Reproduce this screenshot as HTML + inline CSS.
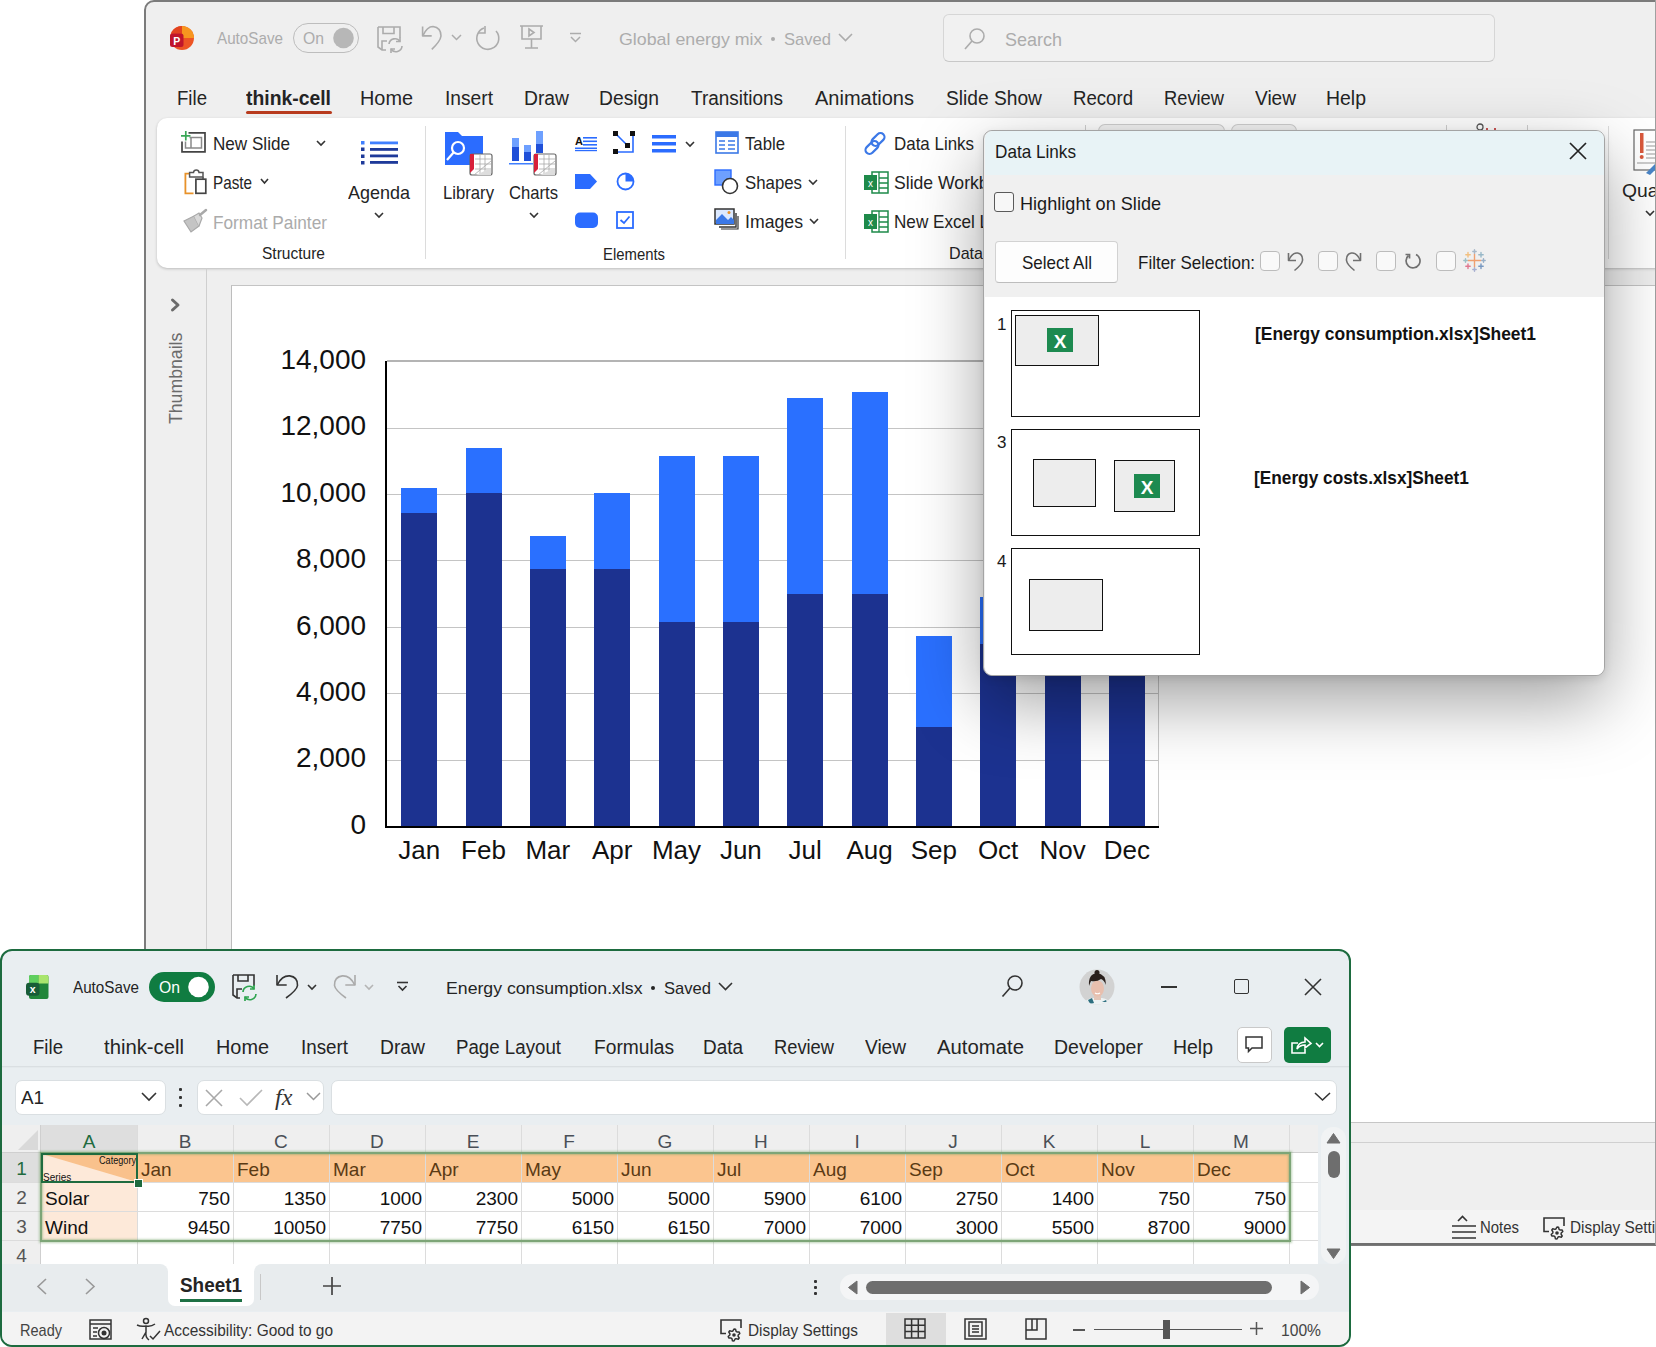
<!DOCTYPE html>
<html><head><meta charset="utf-8"><style>
html,body{margin:0;padding:0;}
body{width:1656px;height:1347px;position:relative;overflow:hidden;background:#fff;font-family:"Liberation Sans",sans-serif;}
.t{position:absolute;white-space:nowrap;line-height:1;transform-origin:0 0;}
svg{overflow:visible}
</style></head><body>
<div style="position:absolute;left:144px;top:0px;width:1540px;height:1246px;box-sizing:border-box;border:2px solid #7b7b7b;border-top-left-radius:10px;background:#efefef;"></div>
<div style="position:absolute;left:157px;top:118px;width:1520px;height:150px;background:#fff;border-radius:10px;box-shadow:0 1px 3px rgba(0,0,0,0.22);"></div>
<div style="position:absolute;left:206px;top:268px;width:1px;height:854px;background:#cfcfcf;"></div>
<div style="position:absolute;left:231px;top:285px;width:1424px;height:837px;box-sizing:border-box;border-left:1px solid #bdbdbd;border-top:1px solid #c4c4c4;background:#fff;"></div>
<div style="position:absolute;left:146px;top:1122px;width:1509px;height:1px;background:#c6c6c6;"></div>
<div style="position:absolute;left:146px;top:1142px;width:1509px;height:1px;background:#d0d0d0;"></div>
<div style="position:absolute;left:146px;top:1210px;width:1509px;height:33px;background:#f4f4f4;"></div>
<div style="position:absolute;left:144px;top:1243px;width:1512px;height:2px;background:#6f6f6f;"></div>
<svg style="position:absolute;left:170px;top:26px;" width="24" height="24" viewBox="0 0 24 24"><circle cx="12" cy="12" r="12" fill="#ed5424"/><path d="M12 0 A12 12 0 0 1 24 12 L12 12 Z" fill="#f7961f"/><path d="M12 0 A12 12 0 0 0 1 7.5 L12 7.5 Z" fill="#e2431f"/><rect x="0" y="7.5" width="13.5" height="13.5" rx="2.5" fill="#c0152b"/><text x="6.8" y="18.5" font-family="Liberation Sans" font-weight="700" font-size="10.5" fill="#fff" text-anchor="middle">P</text></svg>
<div class="t" style="left:217.0px;top:29.7px;font-size:17px;color:#acacac;font-weight:400;transform:scaleX(0.895);">AutoSave</div>
<div style="position:absolute;left:293px;top:23px;width:66px;height:30px;box-sizing:border-box;border:1px solid #bdbdbd;border-radius:15px;"></div>
<div class="t" style="left:303.0px;top:29.7px;font-size:17px;color:#acacac;font-weight:400;transform:scaleX(0.926);">On</div>
<svg style="position:absolute;left:333px;top:28px;" width="22" height="22" viewBox="0 0 22 22"><circle cx="10.5" cy="10" r="10.3" fill="#b7b7b7"/></svg>
<svg style="position:absolute;left:377px;top:26px;" width="27" height="27" viewBox="0 0 27 27"><g fill="none" stroke="#acacac" stroke-width="1.6"><path d="M1 1 H23 V12 M1 1 V21 L5 24 H9"/><path d="M6 1 V7.5 H17 V1"/><path d="M5 24 V15 H10"/></g><g fill="none" stroke="#acacac" stroke-width="1.6"><path d="M12 18 A6 6 0 0 1 23 15.5 M25 20 A6 6 0 0 1 14 23"/><path d="M23 11.5 V15.5 H19 M14 27 V23 H18"/></g></svg>
<svg style="position:absolute;left:421px;top:25px;" width="26" height="28" viewBox="0 0 26 28"><g fill="none" stroke="#acacac" stroke-width="1.6" stroke-linejoin="round"><path d="M1.6 1.6 V10.9 H10.7"/><path d="M1.9 10.7 Q6 1.5 12 1.5 Q20 2.5 20 11 Q19.5 16 10.8 24.4"/></g></svg>
<svg style="position:absolute;left:451px;top:34px;" width="12" height="8" viewBox="0 0 12 8"><path d="M1 1 L5.5 5.5 L10 1" fill="none" stroke="#acacac" stroke-width="1.5"/></svg>
<svg style="position:absolute;left:476px;top:25px;" width="28" height="28" viewBox="0 0 28 28"><g fill="none" stroke="#acacac" stroke-width="1.6"><path d="M20 6 A11 11 0 1 1 8 3"/><path d="M9 1 V8 H2" transform="translate(0,0)"/></g></svg>
<svg style="position:absolute;left:519px;top:25px;" width="26" height="26" viewBox="0 0 26 26"><g fill="none" stroke="#acacac" stroke-width="1.6"><path d="M1 1 H24 M3 1 V14 H22 V1 M12.5 14 V23 M6 23 H19"/><path d="M10 4 L15 7.5 L10 11 Z"/></g></svg>
<svg style="position:absolute;left:569px;top:32px;" width="14" height="12" viewBox="0 0 14 12"><g fill="none" stroke="#acacac" stroke-width="1.5"><path d="M1 1.5 H12"/><path d="M2 5 L6.5 9.5 L11 5"/></g></svg>
<div class="t" style="left:619.0px;top:30.7px;font-size:17px;color:#acacac;font-weight:400;transform:scaleX(1.047);">Global energy mix</div>
<div style="position:absolute;left:771px;top:37px;width:4px;height:4px;background:#acacac;border-radius:2px;"></div>
<div class="t" style="left:784.0px;top:30.7px;font-size:17px;color:#acacac;font-weight:400;transform:scaleX(0.975);">Saved</div>
<svg style="position:absolute;left:838px;top:33px;" width="16" height="10" viewBox="0 0 16 10"><path d="M1 1 L7.5 7.5 L14 1" fill="none" stroke="#acacac" stroke-width="1.6"/></svg>
<div style="position:absolute;left:943px;top:14px;width:552px;height:48px;box-sizing:border-box;border:1px solid #d6d6d6;border-bottom:1.5px solid #c8c8c8;border-radius:6px;background:#f1f1f1;"></div>
<svg style="position:absolute;left:963px;top:27px;" width="24" height="24" viewBox="0 0 24 24"><g fill="none" stroke="#acacac" stroke-width="1.6"><circle cx="14" cy="9" r="7"/><path d="M9 14 L2 22"/></g></svg>
<div class="t" style="left:1005.0px;top:29.7px;font-size:19px;color:#acacac;font-weight:400;transform:scaleX(0.947);">Search</div>
<div class="t" style="left:177.0px;top:88.2px;font-size:20px;color:#242424;font-weight:400;transform:scaleX(0.931);">File</div>
<div class="t" style="left:246.0px;top:88.2px;font-size:20px;color:#242424;font-weight:700;transform:scaleX(0.968);">think-cell</div>
<div class="t" style="left:360.0px;top:88.2px;font-size:20px;color:#242424;font-weight:400;transform:scaleX(0.993);">Home</div>
<div class="t" style="left:445.0px;top:88.2px;font-size:20px;color:#242424;font-weight:400;transform:scaleX(0.960);">Insert</div>
<div class="t" style="left:524.0px;top:88.2px;font-size:20px;color:#242424;font-weight:400;transform:scaleX(0.964);">Draw</div>
<div class="t" style="left:599.0px;top:88.2px;font-size:20px;color:#242424;font-weight:400;transform:scaleX(0.964);">Design</div>
<div class="t" style="left:691.0px;top:88.2px;font-size:20px;color:#242424;font-weight:400;transform:scaleX(0.948);">Transitions</div>
<div class="t" style="left:815.0px;top:88.2px;font-size:20px;color:#242424;font-weight:400;">Animations</div>
<div class="t" style="left:946.0px;top:88.2px;font-size:20px;color:#242424;font-weight:400;transform:scaleX(0.959);">Slide Show</div>
<div class="t" style="left:1073.0px;top:88.2px;font-size:20px;color:#242424;font-weight:400;transform:scaleX(0.931);">Record</div>
<div class="t" style="left:1164.0px;top:88.2px;font-size:20px;color:#242424;font-weight:400;transform:scaleX(0.915);">Review</div>
<div class="t" style="left:1255.0px;top:88.2px;font-size:20px;color:#242424;font-weight:400;transform:scaleX(0.954);">View</div>
<div class="t" style="left:1326.0px;top:88.2px;font-size:20px;color:#242424;font-weight:400;transform:scaleX(0.972);">Help</div>
<div style="position:absolute;left:246px;top:111px;width:86px;height:3px;background:#b83b1e;border-radius:2px;"></div>
<svg style="position:absolute;left:181px;top:131px;" width="26" height="22" viewBox="0 0 26 22"><path d="M7.5 1.8 H24 V20.8 H1 V10.5" stroke="#444" stroke-width="1.7" fill="none"/><path d="M8.5 6.5 H20.5 V17 H4.5 V10.5 M10 6.5 V17" stroke="#8a8a8a" stroke-width="1.5" fill="none"/><path d="M4.8 0 V9.5 M0 4.8 H9.5" stroke="#3aa757" stroke-width="1.7"/></svg>
<div class="t" style="left:213.0px;top:134.1px;font-size:19px;color:#242424;font-weight:400;transform:scaleX(0.900);">New Slide</div>
<svg style="position:absolute;left:316px;top:140px;" width="10" height="7" viewBox="0 0 10 7"><path d="M1 1 L5.0 5 L9 1" fill="none" stroke="#333" stroke-width="1.6"/></svg>
<svg style="position:absolute;left:184px;top:169px;" width="24" height="27" viewBox="0 0 24 27"><path d="M5.6 4.7 H1.4 V24.3 H9.5" stroke="#e8922a" stroke-width="1.8" fill="none"/><path d="M5.6 8 V3.5 H9.5 Q9.8 1 12.3 1 Q14.8 1 15 3.5 H19 V8 Z" stroke="#555" stroke-width="1.5" fill="none"/><path d="M19 8 V10" stroke="#555" stroke-width="1.5"/><rect x="11.9" y="10.2" width="9.9" height="14.1" stroke="#444" stroke-width="1.7" fill="none"/></svg>
<div class="t" style="left:213.0px;top:173.0px;font-size:19px;color:#242424;font-weight:400;transform:scaleX(0.803);">Paste</div>
<svg style="position:absolute;left:260px;top:178px;" width="9" height="7" viewBox="0 0 9 7"><path d="M1 1 L4.5 5 L8 1" fill="none" stroke="#333" stroke-width="1.6"/></svg>
<svg style="position:absolute;left:182px;top:208px;" width="26" height="25" viewBox="0 0 26 25"><g fill="#c4c4c4" stroke="#a9a9a9" stroke-width="1.2"><path d="M2 13 L12 8 L17 18 L9 24 Z"/><path d="M12 8 L17 5 L20 10 L17 18" fill="#d8d8d8"/></g><path d="M18 7 L24 2" stroke="#a9a9a9" stroke-width="2.5" stroke-linecap="round"/></svg>
<div class="t" style="left:213.0px;top:212.7px;font-size:19px;color:#ababab;font-weight:400;transform:scaleX(0.907);">Format Painter</div>
<svg style="position:absolute;left:361px;top:140px;" width="38" height="26" viewBox="0 0 38 26"><g fill="#1e3a9a"><rect x="0" y="7.5" width="3.5" height="3.5"/><rect x="0" y="14.5" width="3.5" height="3.5"/><rect x="0" y="21" width="3.5" height="3.5"/><rect x="9" y="8" width="28" height="2.8"/><rect x="9" y="14.5" width="28" height="2.8"/><rect x="9" y="21" width="28" height="2.8"/></g><rect x="0" y="1" width="3.5" height="3.5" fill="#3f7fff"/><rect x="9" y="1.5" width="28" height="2.8" fill="#3f7fff"/></svg>
<div class="t" style="left:348.0px;top:183.2px;font-size:19px;color:#242424;font-weight:400;transform:scaleX(0.947);">Agenda</div>
<svg style="position:absolute;left:374px;top:212px;" width="10" height="7" viewBox="0 0 10 7"><path d="M1 1 L5.0 5 L9 1" fill="none" stroke="#333" stroke-width="1.6"/></svg>
<div class="t" style="left:262.0px;top:245.0px;font-size:17px;color:#242424;font-weight:400;transform:scaleX(0.913);">Structure</div>
<div style="position:absolute;left:425px;top:126px;width:1px;height:133px;background:#dcdcdc;"></div>
<svg style="position:absolute;left:444px;top:131px;" width="50" height="46" viewBox="0 0 50 46"><path d="M1 1 H14 L18 5 H39 V34 H1 Z" fill="#2b6cff"/><circle cx="14" cy="17" r="6" fill="none" stroke="#fff" stroke-width="2.2"/><path d="M10 21 L3 29" stroke="#fff" stroke-width="2.2"/><rect x="26" y="23" width="22" height="21" rx="2" fill="#fff" stroke="#666" stroke-width="1.2"/><path d="M26 23 L30 23 L30 38 L26 42 Z" fill="#d8203a"/><g stroke="#aaa" stroke-width="0.8"><path d="M31 28 H47 M31 33 H47 M31 38 H47 M36 24 V44 M41 24 V44"/><path d="M30 44 L47 30"/></g><path d="M32 44 L47 37 V44 Z" fill="#ddd"/></svg>
<div class="t" style="left:443.0px;top:183.4px;font-size:19px;color:#242424;font-weight:400;transform:scaleX(0.878);">Library</div>
<svg style="position:absolute;left:509px;top:131px;" width="50" height="46" viewBox="0 0 50 46"><rect x="3" y="7" width="7" height="9" fill="#6ea0ff"/><rect x="3" y="16" width="7" height="14" fill="#1f4fd8"/><rect x="15" y="14" width="7" height="7" fill="#6ea0ff"/><rect x="15" y="21" width="7" height="9" fill="#1f4fd8"/><rect x="27" y="0" width="7" height="13" fill="#6ea0ff"/><rect x="27" y="13" width="7" height="9" fill="#1f4fd8"/><rect x="0" y="32" width="24" height="1.5" fill="#3f7fff"/><rect x="25" y="23" width="22" height="21" rx="2" fill="#fff" stroke="#666" stroke-width="1.2"/><path d="M25 23 L29 23 L29 38 L25 42 Z" fill="#d8203a"/><g stroke="#aaa" stroke-width="0.8"><path d="M30 28 H46 M30 33 H46 M30 38 H46 M35 24 V44 M40 24 V44"/><path d="M29 44 L46 30"/></g><path d="M31 44 L46 37 V44 Z" fill="#ddd"/></svg>
<div class="t" style="left:509.0px;top:183.4px;font-size:19px;color:#242424;font-weight:400;transform:scaleX(0.876);">Charts</div>
<svg style="position:absolute;left:529px;top:212px;" width="10" height="7" viewBox="0 0 10 7"><path d="M1 1 L5.0 5 L9 1" fill="none" stroke="#333" stroke-width="1.6"/></svg>
<svg style="position:absolute;left:575px;top:134px;" width="24" height="18" viewBox="0 0 24 18"><text x="0" y="11" font-family="Liberation Sans" font-weight="700" font-size="11" fill="#111">A</text><g fill="#2b6cff"><rect x="8" y="3" width="14" height="1.6"/><rect x="8" y="6.5" width="14" height="1.6"/><rect x="8" y="10" width="14" height="1.6"/><rect x="0" y="13.5" width="22" height="1.6"/><rect x="0" y="16" width="22" height="1.2"/></g></svg>
<svg style="position:absolute;left:612px;top:130px;" width="26" height="26" viewBox="0 0 26 26"><path d="M4 4 L15 15 M21 3 V22 H3" fill="none" stroke="#2b6cff" stroke-width="1.6"/><g fill="#111"><rect x="1" y="1" width="5" height="5"/><rect x="18" y="1" width="5" height="5"/><rect x="13" y="13" width="5" height="5"/><rect x="1" y="19" width="5" height="5"/></g></svg>
<svg style="position:absolute;left:652px;top:134px;" width="26" height="20" viewBox="0 0 26 20"><g fill="#2b6cff"><rect x="0" y="1" width="24" height="3.5"/><rect x="0" y="8" width="24" height="3.5"/><rect x="0" y="15" width="24" height="3.5"/></g></svg>
<svg style="position:absolute;left:685px;top:141px;" width="10" height="7" viewBox="0 0 10 7"><path d="M1 1 L5.0 5 L9 1" fill="none" stroke="#333" stroke-width="1.6"/></svg>
<svg style="position:absolute;left:575px;top:173px;" width="24" height="18" viewBox="0 0 24 18"><path d="M0 1 H15 L22 8.5 L15 16 H0 Z" fill="#2b6cff"/></svg>
<svg style="position:absolute;left:616px;top:172px;" width="20" height="20" viewBox="0 0 20 20"><circle cx="9.5" cy="9.5" r="8" fill="none" stroke="#2b6cff" stroke-width="1.8"/><path d="M9.5 9.5 V1.5 A8 8 0 0 1 17.5 9.5 Z" fill="#2b6cff"/></svg>
<svg style="position:absolute;left:575px;top:212px;" width="24" height="18" viewBox="0 0 24 18"><rect x="0" y="0.5" width="23" height="15.5" rx="5" fill="#2b6cff"/></svg>
<svg style="position:absolute;left:616px;top:211px;" width="20" height="20" viewBox="0 0 20 20"><rect x="1" y="1" width="16" height="16" fill="none" stroke="#2b6cff" stroke-width="1.8"/><path d="M4.5 9 L8 12 L13.5 5.5" fill="none" stroke="#2b6cff" stroke-width="1.8"/></svg>
<svg style="position:absolute;left:715px;top:131px;" width="26" height="24" viewBox="0 0 26 24"><rect x="1" y="1" width="22" height="21" fill="#fff" stroke="#3b78e7" stroke-width="1.6"/><rect x="1" y="1" width="22" height="5" fill="#3b78e7"/><g stroke="#3b78e7" stroke-width="1.6"><path d="M4 10 H10 M13 10 H20 M4 14 H10 M13 14 H20 M4 18 H10 M13 18 H20"/></g></svg>
<div class="t" style="left:745.0px;top:133.7px;font-size:19px;color:#242424;font-weight:400;transform:scaleX(0.881);">Table</div>
<svg style="position:absolute;left:714px;top:169px;" width="28" height="28" viewBox="0 0 28 28"><rect x="1" y="1" width="16" height="15" fill="#6ea0ff" stroke="#2b6cff" stroke-width="1.4"/><circle cx="16" cy="17" r="7.5" fill="#fff" stroke="#333" stroke-width="1.6"/></svg>
<div class="t" style="left:745.0px;top:172.7px;font-size:19px;color:#242424;font-weight:400;transform:scaleX(0.885);">Shapes</div>
<svg style="position:absolute;left:808px;top:179px;" width="10" height="7" viewBox="0 0 10 7"><path d="M1 1 L5.0 5 L9 1" fill="none" stroke="#333" stroke-width="1.6"/></svg>
<svg style="position:absolute;left:714px;top:208px;" width="28" height="26" viewBox="0 0 28 26"><rect x="1" y="1" width="19" height="15" fill="#dce9ff" stroke="#333" stroke-width="1.5"/><path d="M2 12 L8 6 L14 12 L17 9 L20 12 V16 H2 Z" fill="#3b78e7"/><circle cx="15" cy="4.5" r="1.5" fill="#e8922a"/><path d="M22 5 V19 H5" fill="none" stroke="#333" stroke-width="1.4"/><path d="M24 8 V21 H7" fill="none" stroke="#333" stroke-width="1.2"/></svg>
<div class="t" style="left:745.0px;top:211.7px;font-size:19px;color:#242424;font-weight:400;transform:scaleX(0.931);">Images</div>
<svg style="position:absolute;left:809px;top:218px;" width="10" height="7" viewBox="0 0 10 7"><path d="M1 1 L5.0 5 L9 1" fill="none" stroke="#333" stroke-width="1.6"/></svg>
<div class="t" style="left:603.0px;top:245.5px;font-size:17px;color:#242424;font-weight:400;transform:scaleX(0.875);">Elements</div>
<div style="position:absolute;left:845px;top:126px;width:1px;height:133px;background:#dcdcdc;"></div>
<svg style="position:absolute;left:863px;top:130px;" width="27" height="27" viewBox="0 0 27 27"><g fill="none" stroke="#3b78e7" stroke-width="2.2"><rect x="11" y="2" width="8" height="15" rx="4" transform="rotate(45 15 9.5)"/><rect x="5" y="10" width="8" height="15" rx="4" transform="rotate(45 9 17.5)"/></g></svg>
<div class="t" style="left:894.0px;top:133.7px;font-size:19px;color:#242424;font-weight:400;transform:scaleX(0.891);">Data Links</div>
<svg style="position:absolute;left:864px;top:171px;" width="26" height="24" viewBox="0 0 26 24"><rect x="8" y="1" width="16" height="21" fill="#fff" stroke="#1e8a4a" stroke-width="1.5"/><g stroke="#1e8a4a" stroke-width="1.3"><path d="M15 1 V22 M15 7 H24 M15 12 H24 M15 17 H24"/></g><rect x="0" y="4" width="13" height="15" fill="#1e8a4a"/><text x="6.5" y="15.5" font-family="Liberation Sans" font-size="10" fill="#fff" text-anchor="middle">x</text></svg>
<div class="t" style="left:894.0px;top:172.7px;font-size:19px;color:#242424;font-weight:400;transform:scaleX(0.927);">Slide Workbook</div>
<svg style="position:absolute;left:864px;top:210px;" width="26" height="24" viewBox="0 0 26 24"><rect x="8" y="1" width="16" height="21" fill="#fff" stroke="#1e8a4a" stroke-width="1.5"/><g stroke="#1e8a4a" stroke-width="1.3"><path d="M15 1 V22 M15 7 H24 M15 12 H24 M15 17 H24"/></g><rect x="0" y="4" width="13" height="15" fill="#1e8a4a"/><text x="6.5" y="15.5" font-family="Liberation Sans" font-size="10" fill="#fff" text-anchor="middle">x</text></svg>
<div class="t" style="left:894.0px;top:211.7px;font-size:19px;color:#242424;font-weight:400;transform:scaleX(0.901);">New Excel Link</div>
<div class="t" style="left:949.0px;top:244.7px;font-size:17px;color:#242424;font-weight:400;transform:scaleX(0.947);">Data</div>
<div style="position:absolute;left:1098px;top:124px;width:127px;height:10px;box-sizing:border-box;border:1px solid #cfcfcf;border-bottom:none;border-radius:7px 7px 0 0;background:#f3f3f3;"></div>
<div style="position:absolute;left:1231px;top:124px;width:66px;height:10px;box-sizing:border-box;border:1px solid #cfcfcf;border-bottom:none;border-radius:7px 7px 0 0;background:#f3f3f3;"></div>
<div style="position:absolute;left:1085px;top:125px;width:1px;height:8px;background:#d0d0d0;"></div>
<div style="position:absolute;left:1446px;top:125px;width:1px;height:8px;background:#d0d0d0;"></div>
<div style="position:absolute;left:1527px;top:125px;width:1px;height:8px;background:#d0d0d0;"></div>
<div style="position:absolute;left:1486px;top:128px;width:2px;height:2px;background:#c55;"></div>
<div style="position:absolute;left:1494px;top:128px;width:2px;height:2px;background:#c55;"></div>
<svg style="position:absolute;left:1475px;top:122px;" width="10" height="10" viewBox="0 0 10 10"><circle cx="5" cy="5" r="3" fill="none" stroke="#555" stroke-width="1.3"/></svg>
<div style="position:absolute;left:1608px;top:126px;width:1px;height:133px;background:#dcdcdc;"></div>
<svg style="position:absolute;left:1633px;top:129px;" width="30" height="46" viewBox="0 0 30 46"><rect x="1" y="1" width="24" height="40" fill="#fff" stroke="#666" stroke-width="1.2"/><rect x="7" y="4" width="3.5" height="20" fill="#d9583b"/><circle cx="8.7" cy="28" r="2" fill="#d9583b"/><g stroke="#999"><path d="M13 13 H24 M13 17 H24 M13 21 H24 M13 25 H24 M13 29 H24 M4 34 H24"/></g><path d="M13 44 L24 33 L27 36 L17 46 Z" fill="#4a86c8"/></svg>
<div class="t" style="left:1622.0px;top:180.7px;font-size:19px;color:#242424;font-weight:400;transform:scaleX(1.015);">Quality</div>
<svg style="position:absolute;left:1645px;top:210px;" width="10" height="7" viewBox="0 0 10 7"><path d="M1 1 L5.0 5 L9 1" fill="none" stroke="#333" stroke-width="1.6"/></svg>
<svg style="position:absolute;left:170px;top:298px;" width="11" height="14" viewBox="0 0 11 14"><path d="M2.5 2 L8 7 L2.5 12" fill="none" stroke="#6b6b6b" stroke-width="3" stroke-linecap="round" stroke-linejoin="round"/></svg>
<div class="t" style="left:166px;top:424px;font-size:19px;color:#6a6a6a;transform:rotate(-90deg) scaleX(0.93);transform-origin:0 0;">Thumbnails</div>
<svg style="position:absolute;left:1451px;top:1215px;" width="26" height="26" viewBox="0 0 26 26"><g fill="none" stroke="#333" stroke-width="1.6"><path d="M7 6 L11.5 1.5 L16 6"/><path d="M1 11 H25 M1 17 H25 M1 23 H25"/></g></svg>
<div class="t" style="left:1480.0px;top:1219.2px;font-size:17px;color:#333;font-weight:400;transform:scaleX(0.878);">Notes</div>
<svg style="position:absolute;left:1543px;top:1217px;" width="26" height="24" viewBox="0 0 26 24"><path d="M6 14.5 H1 V1 H21 V9" fill="none" stroke="#333" stroke-width="1.6"/><path d="M14.00 10.00 L15.55 10.20 L16.10 12.36 L16.97 13.03 L19.20 13.00 L19.80 14.45 L18.20 16.00 L18.06 17.09 L19.20 19.00 L18.24 20.24 L16.10 19.64 L15.09 20.06 L14.00 22.00 L12.45 21.80 L11.90 19.64 L11.03 18.97 L8.80 19.00 L8.20 17.55 L9.80 16.00 L9.94 14.91 L8.80 13.00 L9.76 11.76 L11.90 12.36 L12.91 11.94 Z" fill="none" stroke="#333" stroke-width="1.5" stroke-linejoin="round"/><circle cx="14" cy="16" r="1.8" fill="#333"/></svg>
<div class="t" style="left:1570.0px;top:1219.2px;font-size:17px;color:#333;font-weight:400;transform:scaleX(0.902);">Display Settings</div>
<div style="position:absolute;left:1655px;top:0px;width:1px;height:1245px;background:#a0a0a0;"></div>
<div class="t" style="left:350.4px;top:810.8px;font-size:28px;color:#111;font-weight:400;">0</div>
<div style="position:absolute;left:387px;top:760px;width:772px;height:1px;background:#c4c4c4;"></div>
<div class="t" style="left:295.9px;top:744.4px;font-size:28px;color:#111;font-weight:400;">2,000</div>
<div style="position:absolute;left:387px;top:693px;width:772px;height:1px;background:#c4c4c4;"></div>
<div class="t" style="left:295.9px;top:678.0px;font-size:28px;color:#111;font-weight:400;">4,000</div>
<div style="position:absolute;left:387px;top:627px;width:772px;height:1px;background:#c4c4c4;"></div>
<div class="t" style="left:295.9px;top:611.6px;font-size:28px;color:#111;font-weight:400;">6,000</div>
<div style="position:absolute;left:387px;top:560px;width:772px;height:1px;background:#c4c4c4;"></div>
<div class="t" style="left:295.9px;top:545.2px;font-size:28px;color:#111;font-weight:400;">8,000</div>
<div style="position:absolute;left:387px;top:494px;width:772px;height:1px;background:#c4c4c4;"></div>
<div class="t" style="left:280.4px;top:478.8px;font-size:28px;color:#111;font-weight:400;">10,000</div>
<div style="position:absolute;left:387px;top:428px;width:772px;height:1px;background:#c4c4c4;"></div>
<div class="t" style="left:280.4px;top:412.3px;font-size:28px;color:#111;font-weight:400;">12,000</div>
<div style="position:absolute;left:387px;top:360px;width:772px;height:2px;background:#b4b4b4;"></div>
<div class="t" style="left:280.4px;top:345.9px;font-size:28px;color:#111;font-weight:400;">14,000</div>
<div style="position:absolute;left:1158px;top:361px;width:1px;height:466px;background:#c8c8c8;"></div>
<div style="position:absolute;left:401.2px;top:487.8px;width:36px;height:24.9px;background:#2a70ff"></div>
<div style="position:absolute;left:401.2px;top:512.7px;width:36px;height:313.8px;background:#1c3290"></div>
<div class="t" style="left:398.2px;top:837.3px;font-size:26px;color:#111;font-weight:400;">Jan</div>
<div style="position:absolute;left:465.5px;top:447.9px;width:36px;height:44.8px;background:#2a70ff"></div>
<div style="position:absolute;left:465.5px;top:492.8px;width:36px;height:333.7px;background:#1c3290"></div>
<div class="t" style="left:461.1px;top:837.3px;font-size:26px;color:#111;font-weight:400;">Feb</div>
<div style="position:absolute;left:529.8px;top:535.9px;width:36px;height:33.2px;background:#2a70ff"></div>
<div style="position:absolute;left:529.8px;top:569.1px;width:36px;height:257.4px;background:#1c3290"></div>
<div class="t" style="left:525.4px;top:837.3px;font-size:26px;color:#111;font-weight:400;">Mar</div>
<div style="position:absolute;left:594.2px;top:492.8px;width:36px;height:76.4px;background:#2a70ff"></div>
<div style="position:absolute;left:594.2px;top:569.1px;width:36px;height:257.4px;background:#1c3290"></div>
<div class="t" style="left:591.9px;top:837.3px;font-size:26px;color:#111;font-weight:400;">Apr</div>
<div style="position:absolute;left:658.5px;top:456.2px;width:36px;height:166.0px;background:#2a70ff"></div>
<div style="position:absolute;left:658.5px;top:622.3px;width:36px;height:204.2px;background:#1c3290"></div>
<div class="t" style="left:651.9px;top:837.3px;font-size:26px;color:#111;font-weight:400;">May</div>
<div style="position:absolute;left:722.8px;top:456.2px;width:36px;height:166.0px;background:#2a70ff"></div>
<div style="position:absolute;left:722.8px;top:622.3px;width:36px;height:204.2px;background:#1c3290"></div>
<div class="t" style="left:719.9px;top:837.3px;font-size:26px;color:#111;font-weight:400;">Jun</div>
<div style="position:absolute;left:787.2px;top:398.1px;width:36px;height:195.9px;background:#2a70ff"></div>
<div style="position:absolute;left:787.2px;top:594.0px;width:36px;height:232.5px;background:#1c3290"></div>
<div class="t" style="left:788.5px;top:837.3px;font-size:26px;color:#111;font-weight:400;">Jul</div>
<div style="position:absolute;left:851.5px;top:391.5px;width:36px;height:202.6px;background:#2a70ff"></div>
<div style="position:absolute;left:851.5px;top:594.0px;width:36px;height:232.5px;background:#1c3290"></div>
<div class="t" style="left:846.4px;top:837.3px;font-size:26px;color:#111;font-weight:400;">Aug</div>
<div style="position:absolute;left:915.8px;top:635.6px;width:36px;height:91.3px;background:#2a70ff"></div>
<div style="position:absolute;left:915.8px;top:726.9px;width:36px;height:99.6px;background:#1c3290"></div>
<div class="t" style="left:910.7px;top:837.3px;font-size:26px;color:#111;font-weight:400;">Sep</div>
<div style="position:absolute;left:980.2px;top:597.4px;width:36px;height:46.5px;background:#2a70ff"></div>
<div style="position:absolute;left:980.2px;top:643.9px;width:36px;height:182.6px;background:#1c3290"></div>
<div class="t" style="left:977.9px;top:837.3px;font-size:26px;color:#111;font-weight:400;">Oct</div>
<div style="position:absolute;left:1044.5px;top:512.7px;width:36px;height:24.9px;background:#2a70ff"></div>
<div style="position:absolute;left:1044.5px;top:537.6px;width:36px;height:288.9px;background:#1c3290"></div>
<div class="t" style="left:1039.4px;top:837.3px;font-size:26px;color:#111;font-weight:400;">Nov</div>
<div style="position:absolute;left:1108.8px;top:502.7px;width:36px;height:24.9px;background:#2a70ff"></div>
<div style="position:absolute;left:1108.8px;top:527.6px;width:36px;height:298.9px;background:#1c3290"></div>
<div class="t" style="left:1103.7px;top:837.3px;font-size:26px;color:#111;font-weight:400;">Dec</div>
<div style="position:absolute;left:385px;top:361px;width:2px;height:467px;background:#000;"></div>
<div style="position:absolute;left:385px;top:825.5px;width:774px;height:2px;background:#000;"></div>
<div style="position:absolute;left:983px;top:129.5px;width:622px;height:546.5px;box-sizing:border-box;border:1.5px solid #a4a4a4;border-radius:9px;background:#f0f0f0;box-shadow:0 26px 70px rgba(0,0,0,0.37), 0 3px 8px rgba(0,0,0,0.10);overflow:hidden;"></div>
<div style="position:absolute;left:984.5px;top:131px;width:619px;height:44px;background:#e8f3f6;border-top-left-radius:8px;border-top-right-radius:8px;"></div>
<div style="position:absolute;left:984.5px;top:297px;width:619px;height:377.5px;background:#fff;border-bottom-left-radius:8px;border-bottom-right-radius:8px;"></div>
<div class="t" style="left:995.0px;top:141.7px;font-size:19px;color:#1a1a1a;font-weight:400;transform:scaleX(0.902);">Data Links</div>
<svg style="position:absolute;left:1569px;top:142px;" width="18" height="18" viewBox="0 0 18 18"><path d="M1 1 L17 17 M17 1 L1 17" stroke="#222" stroke-width="1.7"/></svg>
<div style="position:absolute;left:994px;top:192px;width:20px;height:20px;box-sizing:border-box;border:1.3px solid #5a5a5a;border-radius:3px;background:#f7f7f7;"></div>
<div class="t" style="left:1020.0px;top:194.4px;font-size:19px;color:#1a1a1a;font-weight:400;transform:scaleX(0.954);">Highlight on Slide</div>
<div style="position:absolute;left:995px;top:241px;width:123px;height:42px;box-sizing:border-box;border:1px solid #d2d2d2;border-bottom-color:#bdbdbd;border-radius:4px;background:#fdfdfd;"></div>
<div class="t" style="left:1021.5px;top:253.4px;font-size:19px;color:#1a1a1a;font-weight:400;transform:scaleX(0.896);">Select All</div>
<div class="t" style="left:1138.0px;top:253.4px;font-size:19px;color:#1a1a1a;font-weight:400;transform:scaleX(0.894);">Filter Selection:</div>
<div style="position:absolute;left:1260px;top:251px;width:20px;height:20px;box-sizing:border-box;border:1px solid #bcbcbc;border-radius:4px;background:#f9f9f9;"></div>
<div style="position:absolute;left:1318px;top:251px;width:20px;height:20px;box-sizing:border-box;border:1px solid #bcbcbc;border-radius:4px;background:#f9f9f9;"></div>
<div style="position:absolute;left:1376px;top:251px;width:20px;height:20px;box-sizing:border-box;border:1px solid #bcbcbc;border-radius:4px;background:#f9f9f9;"></div>
<div style="position:absolute;left:1436px;top:251px;width:20px;height:20px;box-sizing:border-box;border:1px solid #bcbcbc;border-radius:4px;background:#f9f9f9;"></div>
<svg style="position:absolute;left:1287px;top:251px;" width="18" height="20" viewBox="0 0 18 20"><g fill="none" stroke="#707070" stroke-width="1.6" stroke-linejoin="round"><path d="M1.5 2 V9.5 H9"/><path d="M1.8 9.3 Q5 1.5 10.5 2 Q16 3 15.5 9.5 Q15 13.5 7.5 19.5"/></g></svg>
<svg style="position:absolute;left:1345px;top:251px;" width="18" height="20" viewBox="0 0 18 20"><g fill="none" stroke="#707070" stroke-width="1.6" stroke-linejoin="round" transform="translate(17,0) scale(-1,1)"><path d="M1.5 2 V9.5 H9"/><path d="M1.8 9.3 Q5 1.5 10.5 2 Q16 3 15.5 9.5 Q15 13.5 7.5 19.5"/></g></svg>
<svg style="position:absolute;left:1404px;top:252px;" width="18" height="18" viewBox="0 0 18 18"><g fill="none" stroke="#707070" stroke-width="1.7"><path d="M4.5 3.5 A7 7 0 1 0 12 2.5"/><path d="M1.5 2.5 H5.5 V6.5"/></g></svg>
<svg style="position:absolute;left:1463px;top:249px;" width="24" height="24" viewBox="0 0 24 24"><g stroke-width="1.4" stroke-linecap="round"><path d="M11.5 5 V18 M5 11.5 H18" stroke="#f0a070"/><path d="M11.5 0.8 V4.2 M9.8 2.5 H13.2" stroke="#a8b8c8"/><path d="M11.5 18.8 V22.2 M9.8 20.5 H13.2" stroke="#a8b0d0"/><path d="M0.8 11.5 H4.2 M2.5 9.8 V13.2" stroke="#9cc0c8"/><path d="M18.8 11.5 H22.2 M20.5 9.8 V13.2" stroke="#98b0c8"/><path d="M5 3.5 V8 M2.8 5.8 H7.2" stroke="#f2c080"/><path d="M18 3.5 V8 M15.8 5.8 H20.2" stroke="#98b8c8"/><path d="M5 15 V19.5 M2.8 17.2 H7.2" stroke="#e07890"/><path d="M18 15 V19.5 M15.8 17.2 H20.2" stroke="#7898c0"/></g></svg>
<div class="t" style="left:997.0px;top:315.7px;font-size:17px;color:#1a1a1a;font-weight:400;">1</div>
<div style="position:absolute;left:1011px;top:310px;width:189px;height:107px;box-sizing:border-box;border:1.4px solid #111;background:#fff;"></div>
<div style="position:absolute;left:1015px;top:315px;width:84px;height:51px;box-sizing:border-box;border:1.2px solid #111;background:#ededed;"></div>
<svg style="position:absolute;left:1047px;top:328px;" width="26" height="24" viewBox="0 0 26 24"><rect x="0" y="0" width="26" height="24" fill="#1d8a50"/><text x="13" y="19.5" font-family="Liberation Sans" font-weight="700" font-size="19" fill="#fff" text-anchor="middle">X</text></svg>
<div class="t" style="left:1254.5px;top:324.7px;font-size:18px;color:#111;font-weight:700;transform:scaleX(0.969);">[Energy consumption.xlsx]Sheet1</div>
<div class="t" style="left:997.0px;top:433.7px;font-size:17px;color:#1a1a1a;font-weight:400;">3</div>
<div style="position:absolute;left:1011px;top:429px;width:189px;height:107px;box-sizing:border-box;border:1.4px solid #111;background:#fff;"></div>
<div style="position:absolute;left:1033px;top:459px;width:63px;height:48px;box-sizing:border-box;border:1.2px solid #111;background:#ededed;"></div>
<div style="position:absolute;left:1114px;top:460px;width:61px;height:52px;box-sizing:border-box;border:1.2px solid #111;background:#ededed;"></div>
<svg style="position:absolute;left:1134px;top:474px;" width="26" height="24" viewBox="0 0 26 24"><rect x="0" y="0" width="26" height="24" fill="#1d8a50"/><text x="13" y="19.5" font-family="Liberation Sans" font-weight="700" font-size="19" fill="#fff" text-anchor="middle">X</text></svg>
<div class="t" style="left:1254.0px;top:469.2px;font-size:18px;color:#111;font-weight:700;transform:scaleX(0.959);">[Energy costs.xlsx]Sheet1</div>
<div class="t" style="left:997.0px;top:552.7px;font-size:17px;color:#1a1a1a;font-weight:400;">4</div>
<div style="position:absolute;left:1011px;top:548px;width:189px;height:107px;box-sizing:border-box;border:1.4px solid #111;background:#fff;"></div>
<div style="position:absolute;left:1029px;top:579px;width:74px;height:52px;box-sizing:border-box;border:1.2px solid #111;background:#ededed;"></div>
<div style="position:absolute;left:0px;top:949px;width:1351px;height:398px;box-sizing:border-box;border:2px solid #1d6b3f;border-radius:12px;background:#e9eef1;overflow:hidden;"></div>
<svg style="position:absolute;left:25px;top:974px;" width="26" height="26" viewBox="0 0 26 26"><path d="M4 3 Q4 1 6 1 H21.5 Q23.5 1 23.5 3 V23 Q23.5 25 21.5 25 H6 Q4 25 4 23 Z" fill="#21863a"/><path d="M4 3 Q4 1 6 1 H13.5 V9.5 H4 Z" fill="#5fcf5f"/><path d="M13.5 1 H21.5 Q23.5 1 23.5 3 V9.5 H13.5 Z" fill="#a9e56d"/><rect x="1" y="8.8" width="13.5" height="13" rx="3" fill="#185c37"/><text x="7.7" y="19.3" font-family="Liberation Sans" font-weight="700" font-size="10.5" fill="#fff" text-anchor="middle">x</text></svg>
<div class="t" style="left:73.0px;top:978.7px;font-size:17px;color:#242424;font-weight:400;transform:scaleX(0.895);">AutoSave</div>
<div style="position:absolute;left:149px;top:972px;width:66px;height:30px;background:#107c41;border-radius:15px;"></div>
<div class="t" style="left:159.0px;top:978.7px;font-size:17px;color:#fff;font-weight:400;transform:scaleX(0.926);">On</div>
<svg style="position:absolute;left:188px;top:977px;" width="22" height="22" viewBox="0 0 22 22"><circle cx="10.5" cy="10" r="10.3" fill="#fff"/></svg>
<svg style="position:absolute;left:232px;top:974px;" width="27" height="28" viewBox="0 0 27 28"><g fill="none" stroke="#333" stroke-width="1.6"><path d="M1 1 H22 V12 M1 1 V21 L5 24 H8"/><path d="M6 1 V7 H16 V1"/><path d="M5 24 V15 H10"/></g><g fill="none" stroke="#2ea44f" stroke-width="1.7"><path d="M11 18 A6 6 0 0 1 22 15 M24 20 A6 6 0 0 1 13 23"/><path d="M22 11 V15 H18 M13 27 V23 H17"/></g></svg>
<svg style="position:absolute;left:276px;top:973px;" width="26" height="30" viewBox="0 0 26 30"><g fill="none" stroke="#333" stroke-width="1.6" stroke-linejoin="round"><path d="M1 2 V12 H10.7"/><path d="M1.3 11.8 Q6 2.5 13.6 2.9 Q22 4 21.5 12.5 Q21 17 10 25"/></g></svg>
<svg style="position:absolute;left:307px;top:984px;" width="10" height="7" viewBox="0 0 10 7"><path d="M1 1 L5.0 5 L9 1" fill="none" stroke="#333" stroke-width="1.6"/></svg>
<svg style="position:absolute;left:333px;top:973px;" width="26" height="30" viewBox="0 0 26 30"><g fill="none" stroke="#aaa" stroke-width="1.6" stroke-linejoin="round" transform="translate(23,0) scale(-1,1)"><path d="M1 2 V12 H10.7"/><path d="M1.3 11.8 Q6 2.5 13.6 2.9 Q22 4 21.5 12.5 Q21 17 10 25"/></g></svg>
<svg style="position:absolute;left:364px;top:984px;" width="10" height="7" viewBox="0 0 10 7"><path d="M1 1 L5.0 5 L9 1" fill="none" stroke="#b5b5b5" stroke-width="1.6"/></svg>
<svg style="position:absolute;left:396px;top:981px;" width="14" height="12" viewBox="0 0 14 12"><g fill="none" stroke="#333" stroke-width="1.6"><path d="M1 1.5 H12"/><path d="M2.5 5 L6.5 9 L10.5 5"/></g></svg>
<div class="t" style="left:446.0px;top:979.7px;font-size:17px;color:#242424;font-weight:400;transform:scaleX(1.040);">Energy consumption.xlsx</div>
<div style="position:absolute;left:651px;top:986px;width:4px;height:4px;background:#242424;border-radius:2px;"></div>
<div class="t" style="left:664.0px;top:979.7px;font-size:17px;color:#242424;font-weight:400;transform:scaleX(0.975);">Saved</div>
<svg style="position:absolute;left:718px;top:982px;" width="16" height="10" viewBox="0 0 16 10"><path d="M1 1 L7.5 7.5 L14 1" fill="none" stroke="#333" stroke-width="1.6"/></svg>
<svg style="position:absolute;left:1001px;top:975px;" width="23" height="23" viewBox="0 0 23 23"><g fill="none" stroke="#333" stroke-width="1.6"><circle cx="14" cy="8" r="7"/><path d="M9 13 L1.5 21.5"/></g></svg>
<svg style="position:absolute;left:1079px;top:969px;" width="36" height="36" viewBox="0 0 36 36"><defs><clipPath id="av"><circle cx="18" cy="18" r="17.5"/></clipPath></defs><g clip-path="url(#av)"><rect width="36" height="36" fill="#d2d2d2"/><path d="M4 36 Q6 30 14 29 L23 29 Q30 30 32 36 Z" fill="#edf2f3"/><path d="M9 31 L13 29 L15 34 L11 35 Z" fill="#2d6f80"/><path d="M23 33 L27 31 L28 33 Z" fill="#2d6f80"/><rect x="15" y="25" width="7" height="6" fill="#e3c6b8"/><ellipse cx="18.5" cy="19.5" rx="6.5" ry="8" fill="#e8bfae"/><path d="M10 17 Q9 5 18 4 Q27 5 27 16 Q25 11 22 10 Q18 13 12 12 Q11 14 10 17 Z" fill="#2a1f1b"/><circle cx="18" cy="3.5" r="2.5" fill="#2a1f1b"/><path d="M16 24 Q18.5 25.5 21 24" stroke="#fff" stroke-width="1.2" fill="none"/></g></svg>
<div style="position:absolute;left:1161px;top:986px;width:16px;height:1.6px;background:#333;"></div>
<div style="position:absolute;left:1234px;top:979px;width:15px;height:15px;box-sizing:border-box;border:1.6px solid #333;border-radius:2px;"></div>
<svg style="position:absolute;left:1304px;top:978px;" width="18" height="18" viewBox="0 0 18 18"><path d="M1 1 L17 17 M17 1 L1 17" stroke="#333" stroke-width="1.6"/></svg>
<div class="t" style="left:33.0px;top:1037.2px;font-size:20px;color:#242424;font-weight:400;transform:scaleX(0.931);">File</div>
<div class="t" style="left:104.0px;top:1037.2px;font-size:20px;color:#242424;font-weight:400;transform:scaleX(1.014);">think-cell</div>
<div class="t" style="left:216.0px;top:1037.2px;font-size:20px;color:#242424;font-weight:400;transform:scaleX(0.993);">Home</div>
<div class="t" style="left:301.0px;top:1037.2px;font-size:20px;color:#242424;font-weight:400;transform:scaleX(0.940);">Insert</div>
<div class="t" style="left:380.0px;top:1037.2px;font-size:20px;color:#242424;font-weight:400;transform:scaleX(0.964);">Draw</div>
<div class="t" style="left:456.0px;top:1037.2px;font-size:20px;color:#242424;font-weight:400;transform:scaleX(0.935);">Page Layout</div>
<div class="t" style="left:594.0px;top:1037.2px;font-size:20px;color:#242424;font-weight:400;transform:scaleX(0.960);">Formulas</div>
<div class="t" style="left:703.0px;top:1037.2px;font-size:20px;color:#242424;font-weight:400;transform:scaleX(0.947);">Data</div>
<div class="t" style="left:774.0px;top:1037.2px;font-size:20px;color:#242424;font-weight:400;transform:scaleX(0.915);">Review</div>
<div class="t" style="left:865.0px;top:1037.2px;font-size:20px;color:#242424;font-weight:400;transform:scaleX(0.954);">View</div>
<div class="t" style="left:937.0px;top:1037.2px;font-size:20px;color:#242424;font-weight:400;transform:scaleX(1.016);">Automate</div>
<div class="t" style="left:1054.0px;top:1037.2px;font-size:20px;color:#242424;font-weight:400;transform:scaleX(0.976);">Developer</div>
<div class="t" style="left:1173.0px;top:1037.2px;font-size:20px;color:#242424;font-weight:400;transform:scaleX(0.972);">Help</div>
<div style="position:absolute;left:1237px;top:1027px;width:35px;height:36px;box-sizing:border-box;border:1px solid #c9c9c9;border-radius:5px;background:#fff;"></div>
<svg style="position:absolute;left:1245px;top:1036px;" width="20" height="20" viewBox="0 0 20 20"><path d="M1 1 H17 V12 H7 L3.5 15.5 V12 H1 Z" fill="none" stroke="#333" stroke-width="1.5"/></svg>
<div style="position:absolute;left:1284px;top:1027px;width:47px;height:36px;background:#107c41;border-radius:5px;"></div>
<svg style="position:absolute;left:1290px;top:1035px;" width="36" height="22" viewBox="0 0 36 22"><g fill="none" stroke="#fff" stroke-width="1.6"><path d="M8 8 H2 V18 H15 V14"/><path d="M7 14 Q8 7 15 7 V3 L21 8.5 L15 13 V10 Q10 10 7 14 Z"/><path d="M26 8 L29.5 11.5 L33 8"/></g></svg>
<div style="position:absolute;left:2px;top:1066px;width:1347px;height:2px;background:linear-gradient(#d5dadd,#e9eef1);"></div>
<div style="position:absolute;left:15px;top:1080px;width:151px;height:35px;box-sizing:border-box;border:1px solid #dadfe2;border-radius:7px;background:#fff;"></div>
<div class="t" style="left:21.0px;top:1087.7px;font-size:19px;color:#242424;font-weight:400;transform:scaleX(0.990);">A1</div>
<svg style="position:absolute;left:141px;top:1092px;" width="16" height="10" viewBox="0 0 16 10"><path d="M1 1 L8 8 L15 1" fill="none" stroke="#333" stroke-width="1.6"/></svg>
<div style="position:absolute;left:179px;top:1087.5px;width:3px;height:3px;background:#333;border-radius:1px;"></div>
<div style="position:absolute;left:179px;top:1095.5px;width:3px;height:3px;background:#333;border-radius:1px;"></div>
<div style="position:absolute;left:179px;top:1103.5px;width:3px;height:3px;background:#333;border-radius:1px;"></div>
<div style="position:absolute;left:197px;top:1080px;width:127px;height:35px;box-sizing:border-box;border:1px solid #dadfe2;border-radius:7px;background:#fff;"></div>
<svg style="position:absolute;left:205px;top:1089px;" width="19" height="18" viewBox="0 0 19 18"><path d="M1 1 L17 17 M17 1 L1 17" stroke="#a8a8a8" stroke-width="1.6"/></svg>
<svg style="position:absolute;left:239px;top:1089px;" width="24" height="18" viewBox="0 0 24 18"><path d="M1 9 L8 16 L23 1" fill="none" stroke="#b8b8b8" stroke-width="1.6"/></svg>
<div style="position:absolute;left:275px;top:1083px;font-family:'Liberation Serif',serif;font-style:italic;font-size:24px;line-height:28px;color:#333;font-weight:400;">fx</div>
<svg style="position:absolute;left:306px;top:1092px;" width="16" height="10" viewBox="0 0 16 10"><path d="M1 1 L7.5 7.5 L14 1" fill="none" stroke="#999" stroke-width="1.5"/></svg>
<div style="position:absolute;left:331px;top:1080px;width:1006px;height:35px;box-sizing:border-box;border:1px solid #dadfe2;border-radius:7px;background:#fff;"></div>
<svg style="position:absolute;left:1314px;top:1092px;" width="18" height="10" viewBox="0 0 18 10"><path d="M1 1 L8.5 8 L16 1" fill="none" stroke="#333" stroke-width="1.6"/></svg>
<div style="position:absolute;left:2px;top:1125px;width:1316px;height:139px;background:#fff;"></div>
<div style="position:absolute;left:2px;top:1125px;width:1316px;height:28px;background:#efefef;"></div>
<div style="position:absolute;left:2px;top:1153px;width:39px;height:111px;background:#efefef;"></div>
<div style="position:absolute;left:41px;top:1125px;width:96px;height:28px;background:#dedede;"></div>
<div style="position:absolute;left:2px;top:1153px;width:39px;height:29px;background:#dedede;"></div>
<svg style="position:absolute;left:17px;top:1129px;" width="22" height="22" viewBox="0 0 22 22"><path d="M21 1 V21 H1 Z" fill="#d9d9d9"/></svg>
<div style="position:absolute;left:41px;top:1153px;width:1248px;height:29px;background:#fbc58f;"></div>
<div style="position:absolute;left:41px;top:1182px;width:96px;height:58px;background:#fde9d9;"></div>
<div style="position:absolute;left:137px;top:1125px;width:1px;height:139px;background:#dcdcdc;"></div>
<div class="t" style="left:82.7px;top:1132.4px;font-size:19px;color:#1e6b3f;font-weight:400;">A</div>
<div style="position:absolute;left:233px;top:1125px;width:1px;height:139px;background:#dcdcdc;"></div>
<div class="t" style="left:178.7px;top:1132.4px;font-size:19px;color:#4a4f57;font-weight:400;">B</div>
<div style="position:absolute;left:329px;top:1125px;width:1px;height:139px;background:#dcdcdc;"></div>
<div class="t" style="left:274.1px;top:1132.4px;font-size:19px;color:#4a4f57;font-weight:400;">C</div>
<div style="position:absolute;left:425px;top:1125px;width:1px;height:139px;background:#dcdcdc;"></div>
<div class="t" style="left:370.1px;top:1132.4px;font-size:19px;color:#4a4f57;font-weight:400;">D</div>
<div style="position:absolute;left:521px;top:1125px;width:1px;height:139px;background:#dcdcdc;"></div>
<div class="t" style="left:466.7px;top:1132.4px;font-size:19px;color:#4a4f57;font-weight:400;">E</div>
<div style="position:absolute;left:617px;top:1125px;width:1px;height:139px;background:#dcdcdc;"></div>
<div class="t" style="left:563.2px;top:1132.4px;font-size:19px;color:#4a4f57;font-weight:400;">F</div>
<div style="position:absolute;left:713px;top:1125px;width:1px;height:139px;background:#dcdcdc;"></div>
<div class="t" style="left:657.6px;top:1132.4px;font-size:19px;color:#4a4f57;font-weight:400;">G</div>
<div style="position:absolute;left:809px;top:1125px;width:1px;height:139px;background:#dcdcdc;"></div>
<div class="t" style="left:754.1px;top:1132.4px;font-size:19px;color:#4a4f57;font-weight:400;">H</div>
<div style="position:absolute;left:905px;top:1125px;width:1px;height:139px;background:#dcdcdc;"></div>
<div class="t" style="left:854.4px;top:1132.4px;font-size:19px;color:#4a4f57;font-weight:400;">I</div>
<div style="position:absolute;left:1001px;top:1125px;width:1px;height:139px;background:#dcdcdc;"></div>
<div class="t" style="left:948.2px;top:1132.4px;font-size:19px;color:#4a4f57;font-weight:400;">J</div>
<div style="position:absolute;left:1097px;top:1125px;width:1px;height:139px;background:#dcdcdc;"></div>
<div class="t" style="left:1042.7px;top:1132.4px;font-size:19px;color:#4a4f57;font-weight:400;">K</div>
<div style="position:absolute;left:1193px;top:1125px;width:1px;height:139px;background:#dcdcdc;"></div>
<div class="t" style="left:1139.7px;top:1132.4px;font-size:19px;color:#4a4f57;font-weight:400;">L</div>
<div style="position:absolute;left:1289px;top:1125px;width:1px;height:139px;background:#dcdcdc;"></div>
<div class="t" style="left:1233.1px;top:1132.4px;font-size:19px;color:#4a4f57;font-weight:400;">M</div>
<div style="position:absolute;left:2px;top:1152px;width:1316px;height:1px;background:#cfcfcf;"></div>
<div style="position:absolute;left:2px;top:1182px;width:1316px;height:1px;background:#dcdcdc;"></div>
<div style="position:absolute;left:2px;top:1211px;width:1316px;height:1px;background:#dcdcdc;"></div>
<div style="position:absolute;left:2px;top:1240px;width:1316px;height:1px;background:#dcdcdc;"></div>
<div style="position:absolute;left:40px;top:1125px;width:1px;height:139px;background:#cfcfcf;"></div>
<div class="t" style="left:16.2px;top:1159.2px;font-size:19px;color:#1e6b3f;font-weight:400;">1</div>
<div class="t" style="left:16.2px;top:1188.2px;font-size:19px;color:#555;font-weight:400;">2</div>
<div class="t" style="left:16.2px;top:1217.2px;font-size:19px;color:#555;font-weight:400;">3</div>
<div class="t" style="left:16.2px;top:1245.7px;font-size:19px;color:#555;font-weight:400;">4</div>
<svg style="position:absolute;left:42px;top:1154px;" width="95" height="28" viewBox="0 0 95 28"><path d="M0 0 H95 V28 Z" fill="#f9c18c"/><path d="M0 0 L95 28 H0 Z" fill="#fde9d9"/></svg>
<div class="t" style="left:99.0px;top:1156.1px;font-size:10px;color:#111;font-weight:400;transform:scaleX(0.912);">Category</div>
<div class="t" style="left:43.0px;top:1172.6px;font-size:10px;color:#111;font-weight:400;">Series</div>
<div class="t" style="left:141.0px;top:1159.7px;font-size:19px;color:#5a3a14;font-weight:400;">Jan</div>
<div class="t" style="left:198.3px;top:1188.7px;font-size:19px;color:#111;font-weight:400;">750</div>
<div class="t" style="left:187.7px;top:1217.7px;font-size:19px;color:#111;font-weight:400;">9450</div>
<div class="t" style="left:237.0px;top:1159.7px;font-size:19px;color:#5a3a14;font-weight:400;">Feb</div>
<div class="t" style="left:283.7px;top:1188.7px;font-size:19px;color:#111;font-weight:400;">1350</div>
<div class="t" style="left:273.2px;top:1217.7px;font-size:19px;color:#111;font-weight:400;">10050</div>
<div class="t" style="left:333.0px;top:1159.7px;font-size:19px;color:#5a3a14;font-weight:400;">Mar</div>
<div class="t" style="left:379.7px;top:1188.7px;font-size:19px;color:#111;font-weight:400;">1000</div>
<div class="t" style="left:379.7px;top:1217.7px;font-size:19px;color:#111;font-weight:400;">7750</div>
<div class="t" style="left:429.0px;top:1159.7px;font-size:19px;color:#5a3a14;font-weight:400;">Apr</div>
<div class="t" style="left:475.7px;top:1188.7px;font-size:19px;color:#111;font-weight:400;">2300</div>
<div class="t" style="left:475.7px;top:1217.7px;font-size:19px;color:#111;font-weight:400;">7750</div>
<div class="t" style="left:525.0px;top:1159.7px;font-size:19px;color:#5a3a14;font-weight:400;">May</div>
<div class="t" style="left:571.7px;top:1188.7px;font-size:19px;color:#111;font-weight:400;">5000</div>
<div class="t" style="left:571.7px;top:1217.7px;font-size:19px;color:#111;font-weight:400;">6150</div>
<div class="t" style="left:621.0px;top:1159.7px;font-size:19px;color:#5a3a14;font-weight:400;">Jun</div>
<div class="t" style="left:667.7px;top:1188.7px;font-size:19px;color:#111;font-weight:400;">5000</div>
<div class="t" style="left:667.7px;top:1217.7px;font-size:19px;color:#111;font-weight:400;">6150</div>
<div class="t" style="left:717.0px;top:1159.7px;font-size:19px;color:#5a3a14;font-weight:400;">Jul</div>
<div class="t" style="left:763.7px;top:1188.7px;font-size:19px;color:#111;font-weight:400;">5900</div>
<div class="t" style="left:763.7px;top:1217.7px;font-size:19px;color:#111;font-weight:400;">7000</div>
<div class="t" style="left:813.0px;top:1159.7px;font-size:19px;color:#5a3a14;font-weight:400;">Aug</div>
<div class="t" style="left:859.7px;top:1188.7px;font-size:19px;color:#111;font-weight:400;">6100</div>
<div class="t" style="left:859.7px;top:1217.7px;font-size:19px;color:#111;font-weight:400;">7000</div>
<div class="t" style="left:909.0px;top:1159.7px;font-size:19px;color:#5a3a14;font-weight:400;">Sep</div>
<div class="t" style="left:955.7px;top:1188.7px;font-size:19px;color:#111;font-weight:400;">2750</div>
<div class="t" style="left:955.7px;top:1217.7px;font-size:19px;color:#111;font-weight:400;">3000</div>
<div class="t" style="left:1005.0px;top:1159.7px;font-size:19px;color:#5a3a14;font-weight:400;">Oct</div>
<div class="t" style="left:1051.7px;top:1188.7px;font-size:19px;color:#111;font-weight:400;">1400</div>
<div class="t" style="left:1051.7px;top:1217.7px;font-size:19px;color:#111;font-weight:400;">5500</div>
<div class="t" style="left:1101.0px;top:1159.7px;font-size:19px;color:#5a3a14;font-weight:400;">Nov</div>
<div class="t" style="left:1158.3px;top:1188.7px;font-size:19px;color:#111;font-weight:400;">750</div>
<div class="t" style="left:1147.7px;top:1217.7px;font-size:19px;color:#111;font-weight:400;">8700</div>
<div class="t" style="left:1197.0px;top:1159.7px;font-size:19px;color:#5a3a14;font-weight:400;">Dec</div>
<div class="t" style="left:1254.3px;top:1188.7px;font-size:19px;color:#111;font-weight:400;">750</div>
<div class="t" style="left:1243.7px;top:1217.7px;font-size:19px;color:#111;font-weight:400;">9000</div>
<div class="t" style="left:45.0px;top:1188.7px;font-size:19px;color:#111;font-weight:400;">Solar</div>
<div class="t" style="left:45.0px;top:1217.7px;font-size:19px;color:#111;font-weight:400;">Wind</div>
<div style="position:absolute;left:40px;top:1152px;width:1251px;height:90px;box-sizing:border-box;border:2.5px solid #7da577;box-shadow:0 0 2px 1px rgba(110,160,100,0.45), inset 0 0 2px 1px rgba(110,160,100,0.45);"></div>
<div style="position:absolute;left:41px;top:1153px;width:97px;height:30px;box-sizing:border-box;border:2px solid #1e6b3f;"></div>
<div style="position:absolute;left:134px;top:1179px;width:7px;height:7px;background:#1e6b3f;border:1px solid #fff;"></div>
<div style="position:absolute;left:1321px;top:1127px;width:25px;height:137px;background:#f1f3f4;border-radius:12px;"></div>
<svg style="position:absolute;left:1326px;top:1132px;" width="16" height="12" viewBox="0 0 16 12"><path d="M1 11 L7.5 1.5 L14 11 Z" fill="#6e6e6e" stroke="#6e6e6e" stroke-linejoin="round"/></svg>
<div style="position:absolute;left:1328px;top:1151px;width:12px;height:27px;background:#6e6e6e;border-radius:6px;"></div>
<svg style="position:absolute;left:1326px;top:1248px;" width="16" height="12" viewBox="0 0 16 12"><path d="M1 1 L7.5 10.5 L14 1 Z" fill="#6e6e6e" stroke="#6e6e6e" stroke-linejoin="round"/></svg>
<div style="position:absolute;left:2px;top:1264px;width:1347px;height:47px;background:#e8ecee;"></div>
<div style="position:absolute;left:158px;top:1264px;width:105px;height:10px;background:#fff;"></div>
<div style="position:absolute;left:2px;top:1264px;width:165.5px;height:47px;background:#e8ecee;border-top-right-radius:8px;"></div>
<div style="position:absolute;left:254px;top:1264px;width:1095px;height:47px;background:#e8ecee;border-top-left-radius:8px;"></div>
<svg style="position:absolute;left:36px;top:1278px;" width="12" height="17" viewBox="0 0 12 17"><path d="M10 1 L2 8.5 L10 16" fill="none" stroke="#999" stroke-width="1.6"/></svg>
<svg style="position:absolute;left:84px;top:1278px;" width="12" height="17" viewBox="0 0 12 17"><path d="M2 1 L10 8.5 L2 16" fill="none" stroke="#999" stroke-width="1.6"/></svg>
<div style="position:absolute;left:167.5px;top:1264px;width:86.5px;height:42px;background:#fff;border-radius:0 0 7px 7px;"></div>
<div class="t" style="left:180.0px;top:1275.2px;font-size:20px;color:#242424;font-weight:700;transform:scaleX(0.945);">Sheet1</div>
<div style="position:absolute;left:180px;top:1299px;width:62px;height:3px;background:#1e7145;"></div>
<div style="position:absolute;left:260px;top:1274px;width:1px;height:26px;background:#c8c8c8;"></div>
<svg style="position:absolute;left:322px;top:1276px;" width="20" height="20" viewBox="0 0 20 20"><path d="M10 1 V19 M1 10 H19" stroke="#444" stroke-width="1.7"/></svg>
<div style="position:absolute;left:814px;top:1279.5px;width:3px;height:3px;background:#333;border-radius:1px;"></div>
<div style="position:absolute;left:814px;top:1285.5px;width:3px;height:3px;background:#333;border-radius:1px;"></div>
<div style="position:absolute;left:814px;top:1291.5px;width:3px;height:3px;background:#333;border-radius:1px;"></div>
<div style="position:absolute;left:840px;top:1274px;width:479px;height:26px;background:#f4f5f6;border-radius:13px;"></div>
<svg style="position:absolute;left:847px;top:1280px;" width="12" height="15" viewBox="0 0 12 15"><path d="M10 1 L1.5 7.5 L10 14 Z" fill="#6e6e6e" stroke="#6e6e6e" stroke-linejoin="round"/></svg>
<div style="position:absolute;left:866px;top:1281px;width:406px;height:13px;background:#6e6e6e;border-radius:7px;"></div>
<svg style="position:absolute;left:1299px;top:1280px;" width="12" height="15" viewBox="0 0 12 15"><path d="M2 1 L10.5 7.5 L2 14 Z" fill="#6e6e6e" stroke="#6e6e6e" stroke-linejoin="round"/></svg>
<div style="position:absolute;left:2px;top:1312px;width:1347px;height:33px;background:#f3f3f3;border-radius:0 0 10px 10px;"></div>
<div class="t" style="left:20.0px;top:1321.7px;font-size:17px;color:#444;font-weight:400;transform:scaleX(0.855);">Ready</div>
<svg style="position:absolute;left:89px;top:1319px;" width="24" height="22" viewBox="0 0 24 22"><g fill="none" stroke="#333" stroke-width="1.5"><rect x="1" y="1" width="21" height="19"/><path d="M1 5 H22 M4 9 H9 M4 13 H8 M4 17 H8"/><circle cx="15" cy="14" r="5.5"/></g><circle cx="15" cy="14" r="2.5" fill="#333"/></svg>
<svg style="position:absolute;left:136px;top:1317px;" width="26" height="26" viewBox="0 0 26 26"><g fill="none" stroke="#333" stroke-width="1.5"><circle cx="10" cy="4" r="2.5"/><path d="M1 8 Q5 10 10 9 Q15 10 19 7 M10 9 V15 L6 22 M10 15 Q9 20 13 23"/><path d="M14 19 L17 22 L24 14"/></g></svg>
<div class="t" style="left:164.0px;top:1321.7px;font-size:17px;color:#333;font-weight:400;transform:scaleX(0.908);">Accessibility: Good to go</div>
<svg style="position:absolute;left:720px;top:1319px;" width="26" height="24" viewBox="0 0 26 24"><path d="M6 14.5 H1 V1 H21 V9" fill="none" stroke="#333" stroke-width="1.6"/><path d="M14.00 10.00 L15.55 10.20 L16.10 12.36 L16.97 13.03 L19.20 13.00 L19.80 14.45 L18.20 16.00 L18.06 17.09 L19.20 19.00 L18.24 20.24 L16.10 19.64 L15.09 20.06 L14.00 22.00 L12.45 21.80 L11.90 19.64 L11.03 18.97 L8.80 19.00 L8.20 17.55 L9.80 16.00 L9.94 14.91 L8.80 13.00 L9.76 11.76 L11.90 12.36 L12.91 11.94 Z" fill="none" stroke="#333" stroke-width="1.5" stroke-linejoin="round"/><circle cx="14" cy="16" r="1.8" fill="#333"/></svg>
<div class="t" style="left:748.0px;top:1321.7px;font-size:17px;color:#333;font-weight:400;transform:scaleX(0.902);">Display Settings</div>
<div style="position:absolute;left:886px;top:1313px;width:60px;height:32px;background:#dedede;"></div>
<svg style="position:absolute;left:904px;top:1318px;" width="22" height="22" viewBox="0 0 22 22"><g fill="none" stroke="#333" stroke-width="1.5"><rect x="1" y="1" width="20" height="19"/><path d="M1 7.3 H21 M1 13.6 H21 M7.6 1 V20 M14.3 1 V20"/></g></svg>
<svg style="position:absolute;left:964px;top:1318px;" width="24" height="22" viewBox="0 0 24 22"><g fill="none" stroke="#333" stroke-width="1.5"><rect x="1" y="1" width="21" height="20"/><rect x="5" y="4" width="13" height="14"/><path d="M8 8 H15 M8 11 H15 M8 14 H15"/></g></svg>
<svg style="position:absolute;left:1025px;top:1318px;" width="24" height="22" viewBox="0 0 24 22"><g fill="none" stroke="#333" stroke-width="1.5"><path d="M1 21 V1 H21 V21 Z"/><path d="M1 12 H12 V1 M7 1 V12"/></g></svg>
<div style="position:absolute;left:1073px;top:1329px;width:12px;height:1.5px;background:#555;"></div>
<div style="position:absolute;left:1094px;top:1328.5px;width:148px;height:1.5px;background:#555;"></div>
<div style="position:absolute;left:1163px;top:1320px;width:7px;height:19px;background:#555;"></div>
<svg style="position:absolute;left:1249px;top:1321px;" width="16" height="16" viewBox="0 0 16 16"><path d="M7.5 1 V14 M1 7.5 H14" stroke="#555" stroke-width="1.5"/></svg>
<div class="t" style="left:1281.0px;top:1321.7px;font-size:17px;color:#444;font-weight:400;transform:scaleX(0.920);">100%</div>
</body></html>
